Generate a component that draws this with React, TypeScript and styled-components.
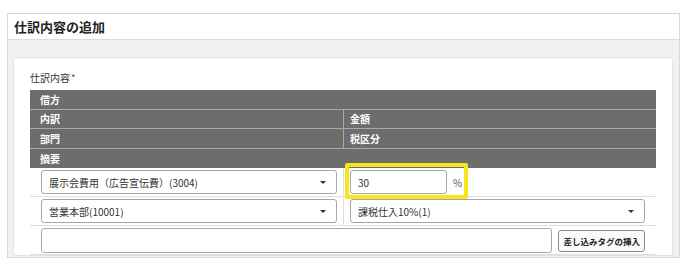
import React from 'react';
import styled, {createGlobalStyle} from 'styled-components';

const GlobalStyle = createGlobalStyle`
  body {
    margin: 0;
    background: #fff;
    font-family: "Noto Sans CJK JP", "Noto Sans", sans-serif;
    color: #333;
  }
`

const Panel = styled.div`
  margin: 13px 0 0 7px;
  width: 673px;
  border: 1px solid #d8d8d8;
  box-sizing: border-box;
`

const PanelHeader = styled.div`
  height: 26px;
  border-bottom: 1px solid #dcdcdc;
  box-sizing: border-box;
  display: flex;
  align-items: center;
  padding-left: 6px;
  font-size: 13px;
  font-weight: 700;
  color: #222;
`

const PanelBody = styled.div`
  background: #f1f1f1;
  padding: 17px 6px 1px 5px;
`

const Card = styled.div`
  background: #fff;
  border: 1px solid #e2e2e2;
  border-radius: 3px;
  padding: 13px 16px 0 16px;
`

const FieldLabel = styled.div`
  font-size: 10px;
  line-height: 14px;
  color: #333;
  margin-bottom: 5px;
  & span {
    color: #e0262e;
    margin-left: 1px;
  }
`

const Table = styled.div`
  width: 626px;
`

const HeadRow = styled.div<{ $split?: boolean }>`
  display: grid;
  grid-template-columns: ${p => p.$split ? '313px 313px' : '1fr'};
  background: #6d6d6d;
  height: 19.5px;
  border-bottom: 1px solid #a9a9a9;
  box-sizing: border-box;
  &:nth-child(4) {
    border-bottom: none;
  }
`

const HeadCell = styled.div<{ $right?: boolean }>`
  display: flex;
  align-items: center;
  padding-left: ${p => p.$right ? '6px' : '10px'};
  font-size: 10px;
  font-weight: 700;
  color: #fff;
  border-left: ${p => p.$right ? '1px solid #a9a9a9' : 'none'};
`

const BodyRow = styled.div<{ $split?: boolean }>`
  display: grid;
  grid-template-columns: ${p => p.$split ? '313px 313px' : '1fr'};
  border-bottom: 1px solid #dedede;
`

const BodyCell = styled.div<{ $right?: boolean }>`
  position: relative;
  display: flex;
  align-items: center;
  gap: 6px;
  padding: ${p => p.$right ? '2px 11px 2px 6px' : '2px 6px 2px 11px'};
  border-left: ${p => p.$right ? '1px solid #dedede' : 'none'};
`

const WideCell = styled.div`
  display: flex;
  align-items: center;
  gap: 6px;
  padding: 2px 11px 1px 11px;
  height: 28px;
  box-sizing: border-box;
`

const Select = styled.div`
  flex: 1;
  height: 24px;
  box-sizing: border-box;
  border: 1px solid #a8a8a8;
  border-radius: 3px;
  display: flex;
  align-items: center;
  justify-content: space-between;
  padding: 0 10px 0 7px;
  font-size: 10px;
  color: #333;
`

const Caret = styled.span`
  width: 0;
  height: 0;
  border-left: 3px solid transparent;
  border-right: 3px solid transparent;
  border-top: 3px solid #333;
`

const TextInput = styled.div<{ $w?: number }>`
  ${p => p.$w ? `width: ${p.$w}px;` : 'flex: 1;'}
  height: ${p => p.$w ? '24px' : '25px'};
  box-sizing: border-box;
  border: 1px solid #a8a8a8;
  border-radius: 3px;
  display: flex;
  align-items: center;
  padding: 0 7px;
  font-size: 10px;
  color: #333;
`

const Unit = styled.span`
  font-size: 10px;
  color: #555;
`

const Highlight = styled.div`
  position: absolute;
  left: 1px;
  top: -5px;
  width: 123px;
  height: 36px;
  border: 4px solid #f8e51c;
  border-radius: 2px;
  box-sizing: border-box;
  pointer-events: none;
`

const TagButton = styled.button`
  height: 22px;
  padding: 0 4px;
  border: 1px solid #8a8a8a;
  border-radius: 3px;
  background: #fafafa;
  font-family: inherit;
  font-size: 8.5px;
  font-weight: 700;
  color: #222;
  white-space: nowrap;
`

export default function App() {
  return (
    <>
      <GlobalStyle/>
      <Panel>
        <PanelHeader>仕訳内容の追加</PanelHeader>
        <PanelBody>
          <Card>
            <FieldLabel>仕訳内容<span>*</span></FieldLabel>
            <Table>
              <HeadRow><HeadCell>借方</HeadCell></HeadRow>
              <HeadRow $split>
                <HeadCell>内訳</HeadCell>
                <HeadCell $right>金額</HeadCell>
              </HeadRow>
              <HeadRow $split>
                <HeadCell>部門</HeadCell>
                <HeadCell $right>税区分</HeadCell>
              </HeadRow>
              <HeadRow><HeadCell>摘要</HeadCell></HeadRow>
              <BodyRow $split>
                <BodyCell>
                  <Select>展示会費用（広告宣伝費）(3004)<Caret/></Select>
                </BodyCell>
                <BodyCell $right>
                  <TextInput $w={97}>30</TextInput>
                  <Unit>%</Unit>
                  <Highlight/>
                </BodyCell>
              </BodyRow>
              <BodyRow $split>
                <BodyCell>
                  <Select>営業本部(10001)<Caret/></Select>
                </BodyCell>
                <BodyCell $right>
                  <Select>課税仕入10%(1)<Caret/></Select>
                </BodyCell>
              </BodyRow>
              <BodyRow>
                <WideCell>
                  <TextInput/>
                  <TagButton>差し込みタグの挿入</TagButton>
                </WideCell>
              </BodyRow>
            </Table>
          </Card>
        </PanelBody>
      </Panel>
    </>
  );
}
